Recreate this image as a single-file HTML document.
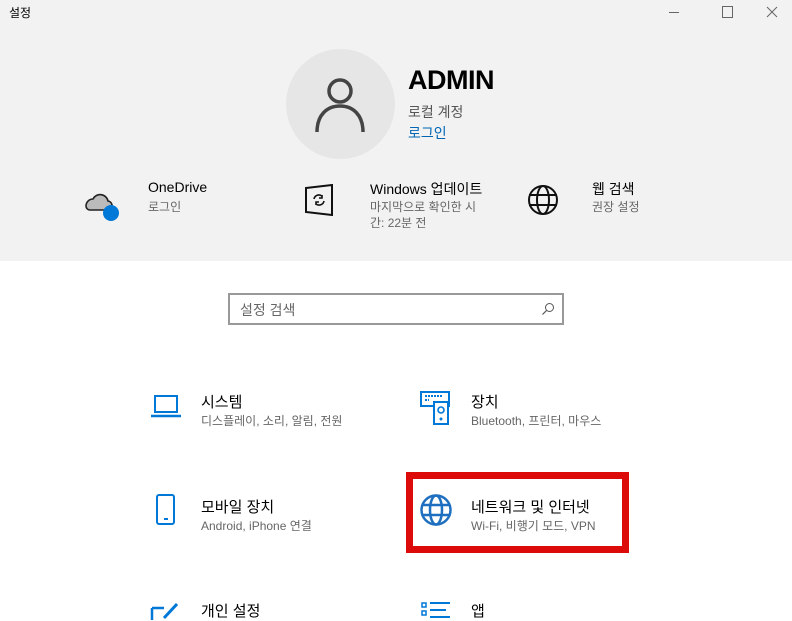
<!DOCTYPE html>
<html><head><meta charset="utf-8"><style>
body{margin:0;width:792px;height:620px;overflow:hidden;background:#fff;font-family:"Liberation Sans","Noto Sans CJK KR",sans-serif;position:relative}
.a{position:absolute;white-space:nowrap}
.hdr{position:absolute;left:0;top:0;width:792px;height:261px;background:#f2f2f2}
.t{font-size:14px;color:#000}
.s{font-size:12px;color:#666}
.ic{position:absolute}
</style></head><body>
<div class="hdr"></div>
<div class="a" style="left:9px;top:4px;font-size:12px;color:#000">설정</div>
<div class="a" style="left:669px;top:12px;width:10px;height:1px;background:#666"></div>
<div class="a" style="left:722px;top:6px;width:9px;height:10px;border:1px solid #666"></div>
<svg class="ic" style="left:766px;top:6px" width="12" height="12"><path d="M1 1L11 11M11 1L1 11" stroke="#666" stroke-width="1"/></svg>

<div class="a" style="left:286px;top:49px;width:109px;height:110px;border-radius:50%;background:#e6e6e6"></div>
<svg class="ic" style="left:312px;top:75px" width="56" height="60"><circle cx="28" cy="16" r="11" fill="none" stroke="#444" stroke-width="3.5"/><path d="M5 57C5 40 15 31 28 31C41 31 51 40 51 57" fill="none" stroke="#444" stroke-width="3.5"/></svg>
<div class="a" style="left:408px;top:65px;font-size:27px;font-weight:bold;color:#000;letter-spacing:-0.5px">ADMIN</div>
<div class="a" style="left:408px;top:102px;font-size:14px;color:#555">로컬 계정</div>
<div class="a" style="left:408px;top:123px;font-size:14px;color:#0066b4">로그인</div>

<svg class="ic" style="left:83px;top:188px" width="40" height="35"><path d="M3 18a7 7 0 0 1 7-7a8 8 0 0 1 15 2a5 5 0 0 1 2 9H7a4 4 0 0 1-4-4z" fill="#bbb" stroke="#222" stroke-width="1.6"/><circle cx="28" cy="25" r="8" fill="#0078d7"/></svg>
<div class="a t" style="left:148px;top:179px">OneDrive</div>
<div class="a s" style="left:148px;top:198px">로그인</div>

<svg class="ic" style="left:302px;top:184px" width="34" height="32"><path d="M4 4L30 1V31L4 28Z" fill="none" stroke="#111" stroke-width="2"/><path d="M12 15a5 5 0 0 1 8-3M20 11v3h-3M22 17a5 5 0 0 1-8 3M14 21v-3h3" fill="none" stroke="#111" stroke-width="1.6"/></svg>
<div class="a t" style="left:370px;top:179px">Windows 업데이트</div>
<div class="a s" style="left:370px;top:198px">마지막으로 확인한 시</div>
<div class="a s" style="left:370px;top:214px">간: 22분 전</div>

<svg class="ic" style="left:527px;top:184px" width="32" height="32"><circle cx="16" cy="16" r="14" fill="none" stroke="#111" stroke-width="2"/><ellipse cx="16" cy="16" rx="6" ry="14" fill="none" stroke="#111" stroke-width="2"/><path d="M2 11H30M2 21H30" stroke="#111" stroke-width="2"/></svg>
<div class="a t" style="left:592px;top:179px">웹 검색</div>
<div class="a s" style="left:592px;top:198px">권장 설정</div>

<div class="a" style="left:228px;top:293px;width:332px;height:28px;border:2px solid #999;background:#fff"></div>
<div class="a" style="left:240px;top:300px;font-size:14px;color:#666">설정 검색</div>
<svg class="ic" style="left:541px;top:302px" width="14" height="14"><circle cx="8.5" cy="5.5" r="4" fill="none" stroke="#555" stroke-width="1"/><path d="M5.5 8.5L1.5 12.5" stroke="#555" stroke-width="1.2"/></svg>

<svg class="ic" style="left:150px;top:393px" width="32" height="26"><rect x="5" y="3" width="22" height="16" fill="none" stroke="#0078d7" stroke-width="2"/><path d="M1 23H31" stroke="#0078d7" stroke-width="2.5"/></svg>
<div class="a" style="left:201px;top:391px;font-size:15px;color:#000">시스템</div>
<div class="a s" style="left:201px;top:412px">디스플레이, 소리, 알림, 전원</div>

<svg class="ic" style="left:419px;top:390px" width="34" height="36"><rect x="2" y="2" width="28" height="14" fill="none" stroke="#0078d7" stroke-width="2"/><path d="M6 6h18M6 10h4" stroke="#0078d7" stroke-width="2" stroke-dasharray="2 1"/><rect x="15" y="12" width="14" height="22" fill="#fff" stroke="#0078d7" stroke-width="2"/><circle cx="22" cy="20" r="3" fill="none" stroke="#0078d7" stroke-width="1.6"/><circle cx="22" cy="29" r="1.5" fill="#0078d7"/></svg>
<div class="a" style="left:471px;top:391px;font-size:15px;color:#000">장치</div>
<div class="a s" style="left:471px;top:412px">Bluetooth, 프린터, 마우스</div>

<svg class="ic" style="left:154px;top:493px" width="24" height="34"><rect x="3" y="2" width="17" height="29" rx="2" fill="none" stroke="#0078d7" stroke-width="2"/><path d="M10 26h4" stroke="#0078d7" stroke-width="2"/></svg>
<div class="a" style="left:201px;top:496px;font-size:15px;color:#000">모바일 장치</div>
<div class="a s" style="left:201px;top:517px">Android, iPhone 연결</div>

<div class="a" style="left:406px;top:472px;width:209px;height:67px;border:7px solid #dd0a0a"></div>
<svg class="ic" style="left:419px;top:493px" width="34" height="34"><circle cx="17" cy="17" r="14.5" fill="none" stroke="#1f6fc0" stroke-width="2.5"/><ellipse cx="17" cy="17" rx="6" ry="14.5" fill="none" stroke="#1f6fc0" stroke-width="2.5"/><path d="M3 12H31M3 22H31" stroke="#1f6fc0" stroke-width="2.5"/></svg>
<div class="a" style="left:471px;top:496px;font-size:15px;color:#000">네트워크 및 인터넷</div>
<div class="a s" style="left:471px;top:517px">Wi-Fi, 비행기 모드, VPN</div>

<svg class="ic" style="left:150px;top:600px" width="32" height="20"><path d="M2 8V20M2 8H14" fill="none" stroke="#0078d7" stroke-width="2.5"/><path d="M14 18L27 4" stroke="#0078d7" stroke-width="3"/></svg>
<div class="a" style="left:201px;top:600px;font-size:15px;color:#000">개인 설정</div>

<svg class="ic" style="left:419px;top:600px" width="34" height="20"><path d="M3 3h4v4h-4zM3 11h4v4h-4z" fill="none" stroke="#0078d7" stroke-width="1.5"/><path d="M11 3H31M11 10H27M11 17H31" stroke="#0078d7" stroke-width="2"/></svg>
<div class="a" style="left:471px;top:600px;font-size:15px;color:#000">앱</div>
</body></html>
